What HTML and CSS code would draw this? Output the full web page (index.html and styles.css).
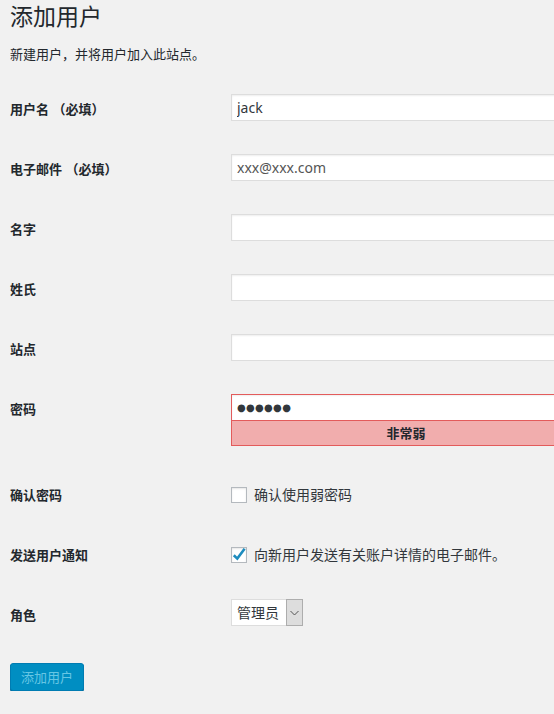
FILE: index.html
```html
<!DOCTYPE html>
<html lang="zh-CN">
<head>
<meta charset="utf-8">
<title>添加用户</title>
<link rel="stylesheet" href="styles.css">
</head>
<body>
<div class="wrap">
  <h1 class="title">添加用户</h1>
  <p class="intro">新建用户，并将用户加入此站点。</p>
  <form class="form">
    <div class="row">
      <label class="label">用户名 <span class="req">（必填）</span></label>
      <div class="field"><input class="text" type="text" value="jack"></div>
    </div>
    <div class="row">
      <label class="label">电子邮件 <span class="req">（必填）</span></label>
      <div class="field"><input class="text text-mail" type="text" value="xxx@xxx.com"></div>
    </div>
    <div class="row">
      <label class="label">名字</label>
      <div class="field"><input class="text" type="text" value=""></div>
    </div>
    <div class="row">
      <label class="label">姓氏</label>
      <div class="field"><input class="text" type="text" value=""></div>
    </div>
    <div class="row">
      <label class="label">站点</label>
      <div class="field"><input class="text" type="text" value=""></div>
    </div>
    <div class="row row-pw">
      <label class="label">密码</label>
      <div class="field">
        <input class="text pw-input" type="text" value="●●●●●●" readonly>
        <div class="meter">非常弱</div>
      </div>
    </div>
    <div class="row">
      <span class="label">确认密码</span>
      <div class="field field-check">
        <label class="check"><span class="box"></span>确认使用弱密码</label>
      </div>
    </div>
    <div class="row">
      <span class="label">发送用户通知</span>
      <div class="field field-check">
        <label class="check"><span class="box"><svg class="tick" viewBox="0 0 16 16" width="16" height="16"><path d="M2.8 8.2 L6.3 11.6 L13.6 1.8" fill="none" stroke="#1e8cbe" stroke-width="2.6" stroke-linecap="butt" stroke-linejoin="miter"/></svg></span>向新用户发送有关账户详情的电子邮件。</label>
      </div>
    </div>
    <div class="row">
      <label class="label">角色</label>
      <div class="field field-select">
        <div class="select">
          <select class="select-main"><option>管理员</option></select>
          <span class="select-arrow"><svg viewBox="0 0 9 6" width="9" height="6"><path d="M0.5 1 L4.5 5 L8.5 1" fill="none" stroke="#555" stroke-width="1"/></svg></span>
        </div>
      </div>
    </div>
  </form>
  <button class="btn" type="button">添加用户</button>
</div>
</body>
</html>
```
FILE: styles.css
```css
html, body {
  margin: 0;
  background: #f1f1f1;
  overflow: hidden;
}
body {
  font-family: "Noto Sans", "Noto Sans CJK SC", sans-serif;
  font-size: 13px;
  color: #23282d;
}
.wrap {
  padding-left: 10px;
}
.title {
  font-size: 23px;
  font-weight: 400;
  line-height: 29px;
  margin: 0;
  padding-top: 2px;
  color: #23282d;
}
.intro {
  margin: 13px 0 0;
  line-height: 20px;
}
.form {
  margin-top: 14px;
  display: flex;
  flex-direction: column;
}
.row {
  display: flex;
  height: 60px;
  align-items: flex-start;
}
.row-pw {
  height: 86px;
}
.label {
  width: 221px;
  flex: none;
  font-weight: 700;
  padding-top: 21px;
  line-height: 20px;
}
.req {
  font-weight: 700;
}
.field {
  padding-top: 16px;
}
.field-check {
  padding-top: 21px;
}
.field-select {
  padding-top: 15px;
}
.text {
  box-sizing: border-box;
  display: block;
  width: 350px;
  height: 27px;
  margin: 0;
  padding: 0 5px;
  border: 1px solid #ddd;
  box-shadow: inset 0 1px 2px rgba(0, 0, 0, .07);
  background: #fff;
  font-family: "Noto Sans", "Noto Sans CJK SC", sans-serif;
  font-size: 14px;
  color: #32373c;
  outline: none;
}
.text-mail {
  color: #555;
}
.pw-input {
  border-color: #e35b5b;
  font-family: "DejaVu Sans", sans-serif;
  font-size: 10px;
  letter-spacing: 0.3px;
  color: #32373c;
}
.meter {
  box-sizing: border-box;
  width: 350px;
  height: 25px;
  border: 1px solid #e35b5b;
  border-top: 0;
  background: #f1adad;
  text-align: center;
  font-weight: 700;
  font-size: 13px;
  line-height: 24px;
  color: #23282d;
}
.check {
  display: flex;
  align-items: center;
  gap: 7px;
  font-size: 14px;
  line-height: 20px;
  color: #32373c;
}
.box {
  box-sizing: border-box;
  position: relative;
  width: 16px;
  height: 16px;
  flex: none;
  border: 1px solid #b4b9be;
  background: #fff;
  box-shadow: inset 0 1px 2px rgba(0, 0, 0, .1);
}
.tick {
  position: absolute;
  left: -1px;
  top: -1px;
}
.select {
  display: inline-flex;
  height: 27px;
}
.select-main {
  box-sizing: border-box;
  appearance: none;
  -webkit-appearance: none;
  width: 55px;
  height: 27px;
  margin: 0;
  padding: 0 5px;
  border: 1px solid #ddd;
  border-right: 0;
  border-radius: 0;
  background: #fff;
  font-family: "Noto Sans", "Noto Sans CJK SC", sans-serif;
  font-size: 14px;
  color: #32373c;
  outline: none;
}
.select-arrow {
  box-sizing: border-box;
  width: 17px;
  height: 27px;
  border: 1px solid #adadad;
  background: #dddddd;
  display: flex;
  align-items: center;
  justify-content: center;
}
.btn {
  box-sizing: border-box;
  margin-top: 19px;
  height: 28px;
  padding: 0 10px;
  background: #008ec2;
  border: 1px solid #007cb2;
  border-radius: 3px;
  box-shadow: 0 1px 0 #006799;
  color: #66c6e4;
  font-family: "Noto Sans", "Noto Sans CJK SC", sans-serif;
  font-size: 13px;
  line-height: 26px;
}
```
